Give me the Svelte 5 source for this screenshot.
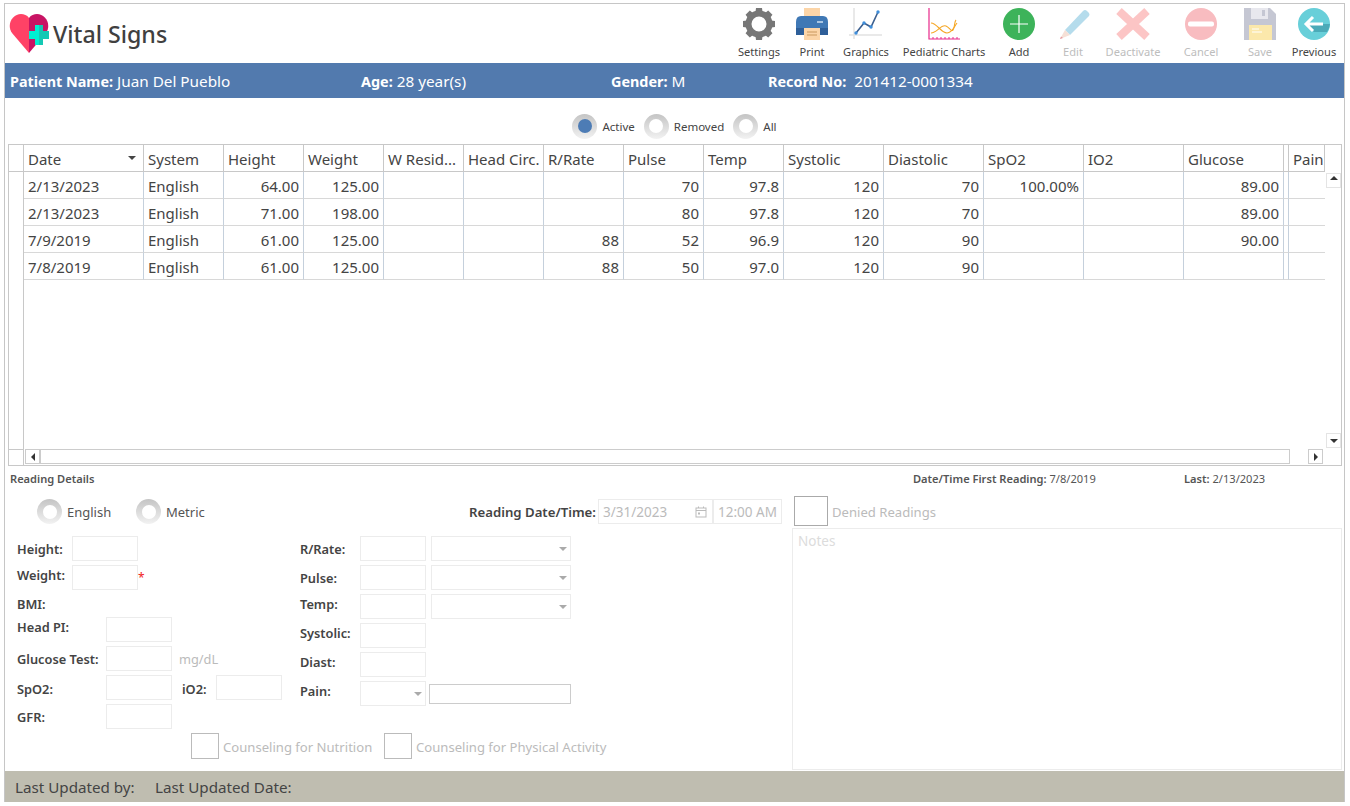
<script>
  const cols = [120,80,80,80,80,80,80,80,80,100,100,100,100,100,5,36];
  const heads = ['Date','System','Height','Weight','W Resid...','Head Circ.','R/Rate','Pulse','Temp','Systolic','Diastolic','SpO2','IO2','Glucose','','Pain'];
  const rows = [
    ['2/13/2023','English','64.00','125.00','','','','70','97.8','120','70','100.00%','','89.00','',''],
    ['2/13/2023','English','71.00','198.00','','','','80','97.8','120','70','','','89.00','',''],
    ['7/9/2019','English','61.00','125.00','','','88','52','96.9','120','90','','','90.00','',''],
    ['7/8/2019','English','61.00','125.00','','','88','50','97.0','120','90','','','','','']
  ];
  const tools = [
    {k:'settings',l:'Settings',w:52},{k:'print',l:'Print',w:54},{k:'graphics',l:'Graphics',w:54},
    {k:'peds',l:'Pediatric Charts',w:102},{k:'add',l:'Add',w:48},{k:'edit',l:'Edit',w:60,off:true},
    {k:'deact',l:'Deactivate',w:60,off:true},{k:'cancel',l:'Cancel',w:76,off:true},{k:'save',l:'Save',w:42,off:true},
    {k:'prev',l:'Previous',w:50,gap:8}
  ];
  const teeth = [0,45,90,135,180,225,270,315];
</script>

<div class="app">
  <header class="top">
    <div class="brand">
      <svg class="logo" width="41" height="40" viewBox="0 0 41 40">
        <path d="M20 39 L3 19 C-3 10 4 0 12 0 C15 0 18 1 20 4 Z" fill="#ff4266"/>
        <path d="M20 39 L20 4 C22 1 25 0 28 0 C36 0 43 10 37 19 Z" fill="#c81464"/>
        <path d="M20 17 H26 V11 H30 V31 H26 V25 H20 Z" fill="#00efd2"/>
        <path d="M30 11 H34 V17 H40 V25 H34 V31 H30 Z" fill="#14c9b4"/>
      </svg>
      <h1>Vital Signs</h1>
    </div>
    <div class="tools">
      {#each tools as t}
        <div class="tool" class:off={t.off} class:gapped={t.gap} style="width:{t.w}px">
          <svg width="34" height="32" viewBox="0 0 34 32">
            {#if t.k==='settings'}
              <g fill="#777">
                {#each teeth as a}<path d="M13 7.5 L14 0 H20 L21 7.5 Z" transform="rotate({a} 17 16)"/>{/each}
              </g>
              <circle cx="17" cy="16" r="10.5" fill="none" stroke="#777" stroke-width="6"/>
            {:else if t.k==='print'}
              <rect x="9" y="0" width="16" height="14" fill="#fcd5a8"/>
              <path d="M1 14 Q1 8 6 8 H28 Q33 8 33 14 V26 Q33 27 31 27 H3 Q1 27 1 26 Z" fill="#3f78b5"/>
              <rect x="1" y="20" width="32" height="7" fill="#2e5f99"/>
              <rect x="22" y="13" width="6" height="2" fill="#a9c6e4"/>
              <rect x="9" y="20" width="16" height="12" fill="#fcd5a8"/>
              <path d="M12 24 H22 M12 27 H22" stroke="#c9985f" stroke-width="1"/>
            {:else if t.k==='graphics'}
              <path d="M5 0 V31 M0 27 H33" stroke="#e2e2e2" stroke-width="1.5" fill="none"/>
              <path d="M7 25 L15 15 L22 19 L29 4" stroke="#3b5f8f" stroke-width="1.6" fill="none"/>
              <g fill="#3f8fdc"><circle cx="7" cy="25" r="1.7"/><circle cx="15" cy="15" r="1.7"/><circle cx="22" cy="19" r="1.7"/><circle cx="29" cy="4" r="1.7"/></g>
            {:else if t.k==='peds'}
              <path d="M2 0 V31 H33" stroke="#e8288a" stroke-width="1.2" fill="none"/>
              <path d="M6 31 v-2 M10 31 v-2 M14 31 v-2 M18 31 v-2 M22 31 v-2 M26 31 v-2 M30 31 v-2" stroke="#e8288a" stroke-width="1"/>
              <path d="M4 15 C10 15 14 25 20 25 C25 25 27 19 30 15" stroke="#f5a623" stroke-width="1.1" fill="none"/>
              <path d="M4 25 C10 25 14 16 19 18 C23 20 24 24 26 22 C28 20 27 14 29 12" stroke="#f5a623" stroke-width="1.1" fill="none"/>
            {:else if t.k==='add'}
              <circle cx="17" cy="16" r="16" fill="#3db35a"/>
              <path d="M17 7 V25 M8 16 H26" stroke="#fff" stroke-width="1.2"/>
            {:else if t.k==='edit'}
              <path d="M9 22 L27 3 Q29 1 31 3 L33 5 Q34 7 33 8 L14 27 Z" fill="#b5dcec"/>
              <path d="M9 22 L14 27 L4 31 Z" fill="#f6e0d6"/>
              <path d="M5 28.5 L4 31 L7 30 Z" fill="#e89aa0"/>
            {:else if t.k==='deact'}
              <path d="M3 3 L31 29 M31 3 L3 29" stroke="#fcc5c5" stroke-width="8"/>
            {:else if t.k==='cancel'}
              <circle cx="17" cy="16" r="16" fill="#f8bcc0"/>
              <rect x="4" y="13.5" width="26" height="5" rx="2" fill="#fff"/>
            {:else if t.k==='save'}
              <path d="M1 0 H27 L33 6 V32 H1 Z" fill="#c5c7d3"/>
              <rect x="8" y="0" width="17" height="11" fill="#e8e8ee"/>
              <rect x="19" y="2" width="3" height="6" fill="#c5c7d3"/>
              <rect x="6" y="17" width="23" height="15" fill="#fbe8ab"/>
              <path d="M9 21 H16 M9 24 H19" stroke="#fff" stroke-width="1"/>
            {:else if t.k==='prev'}
              <circle cx="17" cy="16" r="16" fill="#68cfd9"/>
              <path d="M9 16 L17 24 L30 24 A16 16 0 0 0 33 16 Z" fill="#4baab8"/>
              <path d="M16 9 L9 16 L16 23 M9 16 H26" stroke="#fff" stroke-width="3" fill="none"/>
            {/if}
          </svg>
          <span>{t.l}</span>
        </div>
      {/each}
    </div>
  </header>

  <div class="bar">
    <span class="b1"><b>Patient Name:</b> Juan Del Pueblo</span>
    <span class="b2"><b>Age:</b> 28 year(s)</span>
    <span class="b3"><b>Gender:</b> M</span>
    <span class="b4"><b>Record No:</b> <span class="rec">201412-0001334</span></span>
  </div>

  <div class="filter">
    <span class="radio on"></span><span class="flabel">Active</span>
    <span class="radio"></span><span class="flabel">Removed</span>
    <span class="radio"></span><span class="flabel">All</span>
  </div>

  <div class="grid">
    <div class="gridtop">
      <div class="rowhead"><div class="rh-top"></div></div>
      <table>
        <colgroup>{#each cols as c}<col style="width:{c}px" />{/each}</colgroup>
        <thead>
          <tr>{#each heads as h,i}<th class:sort={i===0}>{h}</th>{/each}</tr>
        </thead>
        <tbody>
          {#each rows as r}
            <tr>{#each r as c,i}<td class:right={i>=2}>{c}</td>{/each}</tr>
          {/each}
        </tbody>
      </table>
      <div class="vscroll">
        <div class="sbtn"><i class="tri up"></i></div>
        <div class="sbtn"><i class="tri down"></i></div>
      </div>
    </div>
    <div class="hbar">
      <div class="corner"></div>
      <div class="sbtn h"><i class="tri left"></i></div>
      <div class="track"></div>
      <div class="sbtn h"><i class="tri rightt"></i></div>
    </div>
  </div>

  <div class="inforow">
    <span class="i1">Reading Details</span>
    <span class="i2"><b>Date/Time First Reading:</b> 7/8/2019</span>
    <span class="i3"><b>Last:</b> 2/13/2023</span>
  </div>

  <div class="lower">
    <div class="leftpane">
      <div class="toprow">
        <span class="radio"></span><span class="rlabel">English</span>
        <span class="radio"></span><span class="rlabel">Metric</span>
        <b class="rdt">Reading Date/Time:</b>
        <div class="field date"><span>3/31/2023</span>
          <svg width="12" height="12" viewBox="0 0 12 12" fill="none" stroke="#bbb"><rect x="1" y="2" width="10" height="9"/><path d="M1 4.5 H11 M3.5 0.5 V2 M8.5 0.5 V2"/><rect x="3" y="6.5" width="2" height="2" fill="#bbb" stroke="none"/></svg>
        </div>
        <div class="field time">12:00 AM</div>
      </div>

      <div class="formcols">
        <div class="col1">
          <div class="frow"><b class="l1">Height:</b><div class="box"></div></div>
          <div class="frow"><b class="l1 up">Weight:</b><div class="box"></div><span class="star">*</span></div>
          <div class="frow bmi"><b>BMI:</b></div>
          <div class="frow"><b class="l2 up">Head PI:</b><div class="box"></div></div>
          <div class="frow"><b class="l2">Glucose Test:</b><div class="box"></div><span class="unit">mg/dL</span></div>
          <div class="frow"><b class="l2 dn">SpO2:</b><div class="box"></div><b class="io dn">iO2:</b><div class="box"></div></div>
          <div class="frow"><b class="l2">GFR:</b><div class="box"></div></div>
        </div>
        <div class="col2">
          <div class="frow"><b class="l3">R/Rate:</b><div class="box"></div><div class="box sel"><i class="tri down soft"></i></div></div>
          <div class="frow"><b class="l3">Pulse:</b><div class="box"></div><div class="box sel"><i class="tri down soft"></i></div></div>
          <div class="frow"><b class="l3 up">Temp:</b><div class="box"></div><div class="box sel"><i class="tri down soft"></i></div></div>
          <div class="frow"><b class="l3 up">Systolic:</b><div class="box"></div></div>
          <div class="frow"><b class="l3 up">Diast:</b><div class="box"></div></div>
          <div class="frow"><b class="l3 up">Pain:</b><div class="box painsel"><i class="tri down soft"></i></div><div class="paintxt"></div></div>
        </div>
      </div>

      <div class="counsel">
        <span class="check small"></span><span class="ctext c1">Counseling for Nutrition</span>
        <span class="check small"></span><span class="ctext">Counseling for Physical Activity</span>
      </div>
    </div>

    <div class="rightpane">
      <div class="denied"><span class="check"></span><span class="ctext">Denied Readings</span></div>
      <div class="notes">Notes</div>
    </div>
  </div>

  <footer class="foot">
    <span>Last Updated by:</span>
    <span>Last Updated Date:</span>
  </footer>
</div>

<style>
  :global(body) { margin: 0; background: #fff; }
  .app {
    box-sizing: border-box; width: 1341px; height: 799px; margin: 3px 0 0 4px;
    border: 1px solid #c6c6c6; border-bottom: 0;
    display: flex; flex-direction: column;
    font-family: "Noto Sans", "Open Sans", sans-serif; color: #444; background: #fff;
  }
  .top { height: 59px; display: flex; justify-content: space-between; flex: none; }
  .brand { display: flex; align-items: flex-start; padding: 10px 0 0 4px; }
  .logo { display: block; }
  h1 { margin: 4px 0 0 3px; font-size: 23.2px; line-height: 32px; font-weight: 500; color: #404040; }
  .tools { display: flex; padding-right: 5px; }
  .tool { display: flex; flex-direction: column; align-items: center; padding-top: 4px; font-size: 11.1px; color: #444; white-space: nowrap; flex: none; }
  .tool svg { display: block; margin-bottom: 4px; }
  .tool span { line-height: 16px; }
  .tool.off span { color: #bdbdbd; }
  .tool.gapped { margin-left: 8px; }

  .bar { height: 35px; flex: none; background: #527aae; color: #fff; font-size: 15.3px; display: flex; align-items: center; padding-left: 5px; white-space: nowrap; }
  .bar b { font-weight: 700; font-size: 14.4px; }
  .b1 { width: 351px; }
  .b2 { width: 250px; }
  .b3 { width: 157px; }
  .rec { margin-left: 4px; }

  .filter { height: 46px; flex: none; box-sizing: border-box; padding-top: 10px; display: flex; align-items: center; justify-content: center; font-size: 11.5px; }
  .flabel { margin: 0 9px 0 5px; }
  .flabel:last-child { margin-right: 0; }
  .radio { width: 25px; height: 25px; border-radius: 50%; background: linear-gradient(#c4c4c4, #f2f2f2); display: flex; align-items: center; justify-content: center; flex: none; }
  .radio::after { content: ""; width: 14px; height: 14px; border-radius: 50%; background: #fff; }
  .radio.on::after { background: #4d7cb5; }

  .grid { box-sizing: border-box; width: 1334px; height: 322px; margin-left: 3px; flex: none; border: 1px solid #c8c8c8; display: flex; flex-direction: column; }
  .gridtop { flex: 1; display: flex; min-height: 0; }
  .rowhead { width: 15px; flex: none; box-sizing: border-box; border-right: 1px solid #c8c8c8; }
  .rh-top { height: 26px; border-bottom: 1px solid #c8c8c8; margin-right: -1px; }
  table { width: 1301px; table-layout: fixed; border-collapse: separate; border-spacing: 0; font-size: 15px; align-self: flex-start; flex: none; }
  th, td { box-sizing: border-box; height: 27px; padding: 1px 4px 0; border-right: 1px solid #c5d0dc; border-bottom: 1px solid #d8d8d8; white-space: nowrap; overflow: hidden; font-weight: 400; text-align: left; color: #444; }
  td:last-child { border-right: 0; }
  th { border-right-color: #c8c8c8; border-bottom-color: #c8c8c8; position: relative; }
  td.right { text-align: right; }
  th.sort::after { content: ""; position: absolute; right: 7px; top: 11px; border: 4px solid transparent; border-top: 4px solid #444; border-bottom: 0; }
  .vscroll { flex: 1; display: flex; flex-direction: column; justify-content: space-between; padding: 28px 0 1px 1px; }
  .sbtn { box-sizing: border-box; width: 15px; height: 15px; border: 1px solid #e4e4e4; display: flex; align-items: center; justify-content: center; flex: none; }
  .sbtn.h { border-color: #ccc; }
  .tri { display: block; width: 0; height: 0; border: 4px solid transparent; }
  .tri.up { border-bottom: 4px solid #333; border-top: 0; }
  .tri.down { border-top: 4px solid #333; border-bottom: 0; }
  .tri.left { border-right: 4px solid #333; border-left: 0; }
  .tri.rightt { border-left: 4px solid #333; border-right: 0; }
  .tri.soft { border-top-color: #aaa; }
  .hbar { height: 16px; flex: none; display: flex; }
  .corner { width: 15px; box-sizing: border-box; border-top: 1px solid #c8c8c8; border-right: 1px solid #c8c8c8; margin-right: 1px; }
  .track { box-sizing: border-box; width: 1250px; height: 15px; border: 1px solid #ccc; margin-right: 18px; }

  .inforow { height: 25px; flex: none; display: flex; align-items: center; font-size: 11.1px; color: #555; padding: 0 0 0 5px; box-sizing: border-box; white-space: nowrap; }
  .inforow b { font-weight: 600; }
  .i1 { width: 903px; font-weight: 600; }
  .i2 { width: 271px; }

  .lower { flex: 1; display: flex; min-height: 0; }
  .leftpane { width: 787px; flex: none; }
  .toprow { display: flex; align-items: center; height: 25px; margin-top: 8px; padding-left: 32px; font-size: 13.5px; }
  .rlabel { margin-left: 5px; color: #555; font-size: 13px; }
  .rlabel:nth-child(2) { width: 69px; }
  .rlabel:nth-child(4) { width: 303px; }
  .rdt { width: 129px; font-size: 13.2px; font-weight: 600; white-space: nowrap; }
  .field { box-sizing: border-box; height: 25px; border: 1px solid #ececec; display: flex; align-items: center; color: #bbb; padding: 0 4px; }
  .date { width: 115px; justify-content: space-between; }
  .date svg { margin-right: 1px; }
  .time { width: 69px; }

  .formcols { display: flex; margin-top: 12px; padding-left: 12px; }
  .col1 { width: 283px; flex: none; }
  .frow { display: flex; align-items: center; height: 25px; margin-bottom: 4px; font-size: 12.8px; white-space: nowrap; }
  .frow b { font-weight: 600; color: #444; }
  .frow.bmi { height: 19px; }
  .l1 { width: 55px; }
  .l2 { width: 89px; }
  .l3 { width: 60px; }
  .up { margin-bottom: 6px; }
  .dn { margin-top: 2px; }
  .box { box-sizing: border-box; width: 66px; height: 25px; border: 1px solid #ececec; flex: none; }
  .sel { width: 140px; margin-left: 5px; display: flex; align-items: center; justify-content: flex-end; padding-right: 3px; }
  .painsel { display: flex; align-items: center; justify-content: flex-end; padding-right: 3px; }
  .paintxt { box-sizing: border-box; width: 142px; height: 20px; margin-left: 3px; border: 1px solid #ccc; }
  .star { color: #f02020; margin-left: 0; font-size: 12px; }
  .unit { color: #bbb; margin-left: 7px; }
  .io { width: 34px; margin-left: 10px; }

  .counsel { display: flex; align-items: center; height: 26px; padding-left: 186px; margin-top: 0; }
  .check { box-sizing: border-box; width: 34px; height: 30px; border: 1px solid #aaa; flex: none; }
  .check.small { width: 28px; height: 26px; border-color: #bbb; }
  .ctext { color: #bbb; font-size: 13.1px; margin-left: 4px; padding-top: 1px; white-space: nowrap; }
  .c1 { width: 161px; }

  .rightpane { flex: 1; padding-top: 5px; }
  .denied { display: flex; align-items: center; margin-left: 2px; height: 30px; }
  .notes { box-sizing: border-box; width: 550px; height: 242px; margin-top: 2px; border: 1px solid #ececec; padding: 3px 5px; font-size: 13.5px; color: #dcdcdc; }

  .foot { height: 31px; flex: none; background: #bfbdb0; display: flex; align-items: center; padding-left: 10px; font-size: 15.2px; color: #444; }
  .foot span:first-child { width: 140px; }
</style>
